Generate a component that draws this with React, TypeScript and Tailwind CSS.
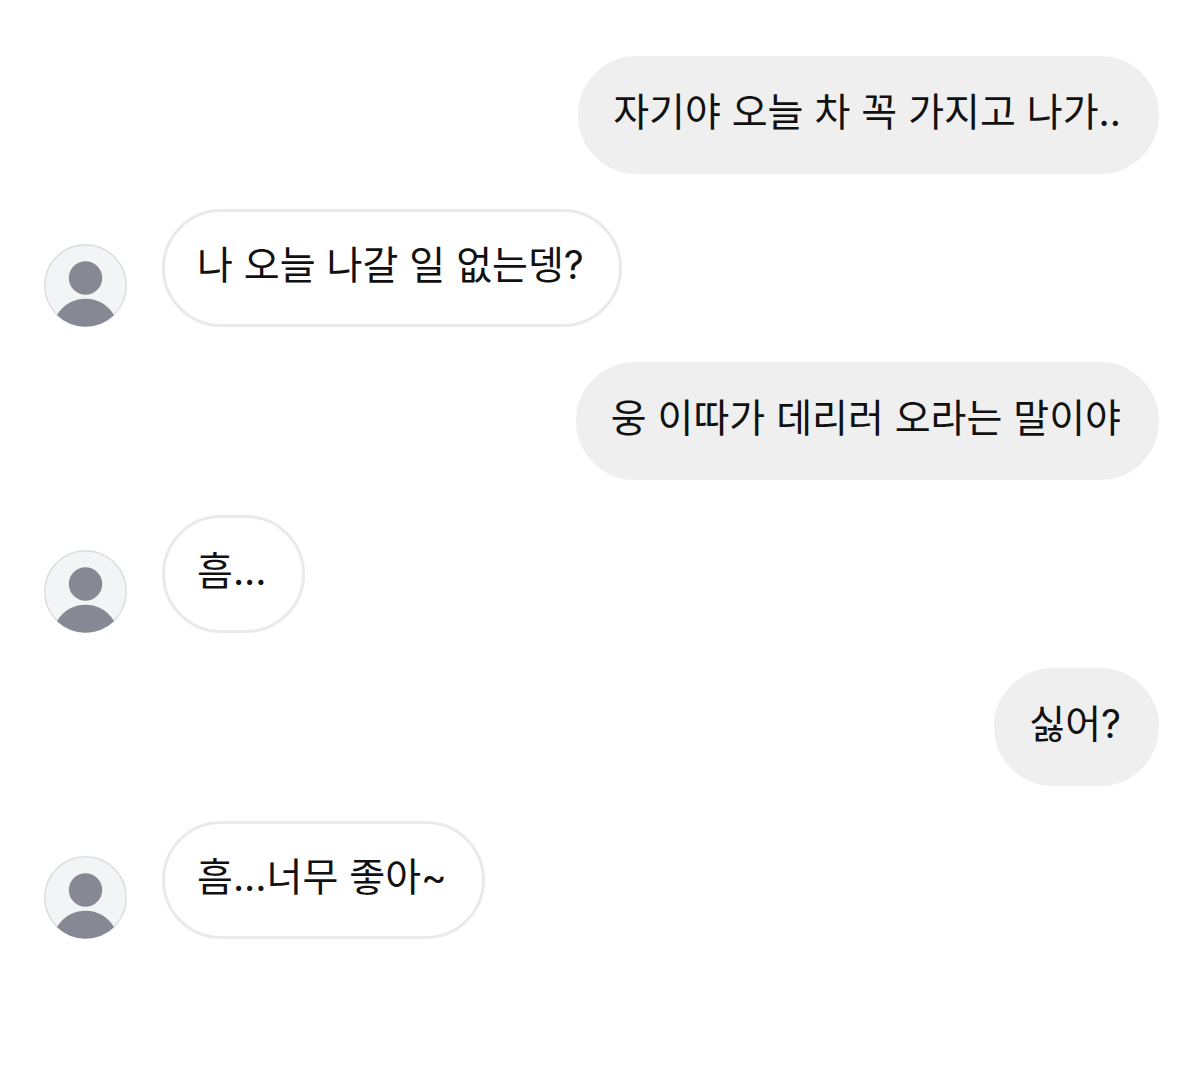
import { clsx } from 'clsx';

interface Message {
  id: number;
  mine: boolean;
  text: string;
}

const MESSAGES: Message[] = [
  { id: 1, mine: true, text: '자기야 오늘 차 꼭 가지고 나가..' },
  { id: 2, mine: false, text: '나 오늘 나갈 일 없는뎅?' },
  { id: 3, mine: true, text: '웅 이따가 데리러 오라는 말이야' },
  { id: 4, mine: false, text: '흠...' },
  { id: 5, mine: true, text: '싫어?' },
  { id: 6, mine: false, text: '흠...너무 좋아~' },
];

function Avatar() {
  return (
    <svg viewBox="0 0 83 83" className="size-[83px] shrink-0" aria-hidden="true">
      <circle cx="41.5" cy="41.5" r="40.75" fill="#f2f4f6" stroke="#dcdddf" strokeWidth="1.5" />
      <circle cx="41.5" cy="34" r="16.7" fill="#868993" />
      <path d="M13 71.3A32.7 32.7 0 0 1 70 71.3A41.5 41.5 0 0 1 13 71.3Z" fill="#868993" />
    </svg>
  );
}

function MessageRow({ mine, text }: Message) {
  return (
    <li className={clsx('flex items-end gap-[35px]', mine && 'justify-end')}>
      {!mine && <Avatar />}
      <p
        className={clsx(
          'rounded-[59px] border-[3px] pt-[27px] pr-[35px] pb-[33px] pl-8 text-[39px] leading-[52px]',
          mine ? 'border-[#efefef] bg-[#efefef]' : 'border-[#eaeaea] bg-white',
        )}
      >
        {text}
      </p>
    </li>
  );
}

export default function App() {
  return (
    <main className="min-h-screen bg-white pt-14 pr-5 pl-11 font-[Inter,'Noto_Sans_CJK_KR',sans-serif] text-[#111111]">
      <ul className="flex flex-col gap-[35px]">
        {MESSAGES.map((message) => (
          <MessageRow key={message.id} {...message} />
        ))}
      </ul>
    </main>
  );
}
